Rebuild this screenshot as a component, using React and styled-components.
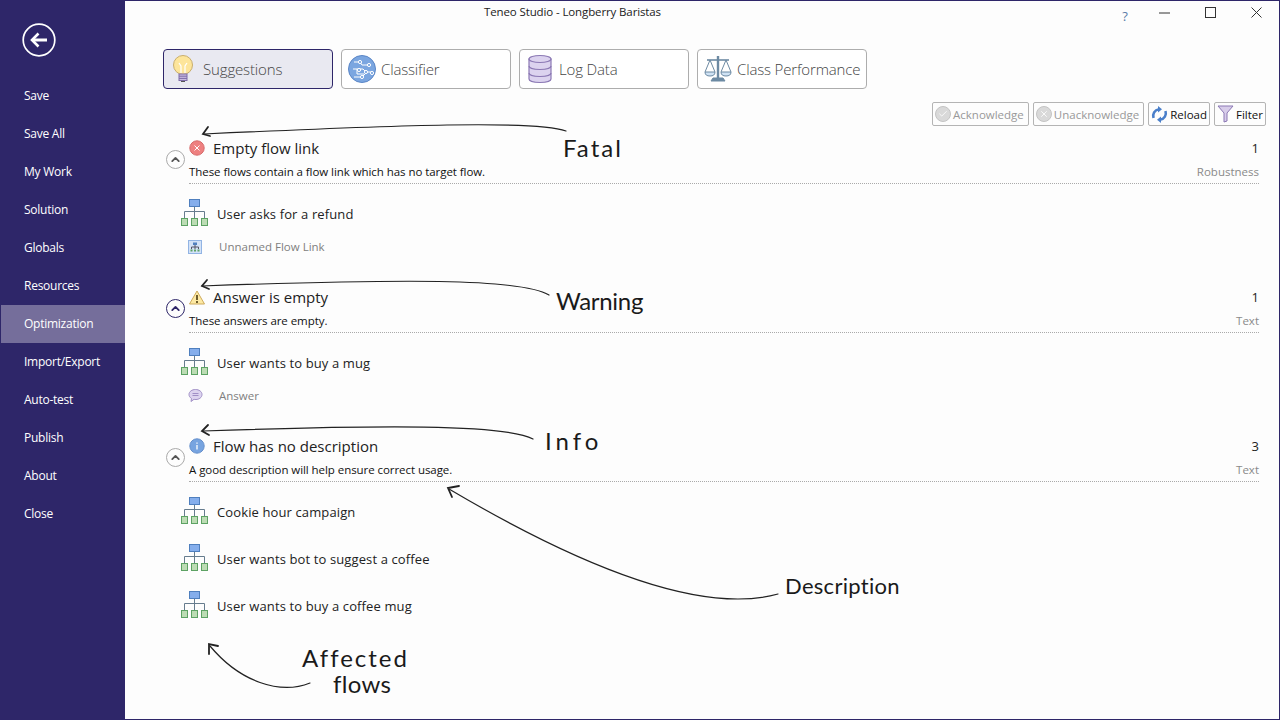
import React from 'react'
import styled, { createGlobalStyle } from 'styled-components'
import { X, Check, ChevronUp } from 'lucide-react'

const menu = ['Save', 'Save All', 'My Work', 'Solution', 'Globals', 'Resources', 'Optimization', 'Import/Export', 'Auto-test', 'Publish', 'About', 'Close']

const tabs = [
  { label: 'Suggestions', icon: <BulbIcon />, active: true },
  { label: 'Classifier', icon: <ClassifierIcon /> },
  { label: 'Log Data', icon: <DatabaseIcon /> },
  { label: 'Class Performance', icon: <ScaleIcon /> },
]

const sections = [
  {
    kind: 'fatal',
    title: 'Empty flow link',
    count: 1,
    desc: 'These flows contain a flow link which has no target flow.',
    tag: 'Robustness',
    flows: ['User asks for a refund'],
    sub: { label: 'Unnamed Flow Link', icon: <LinkIcon /> },
  },
  {
    kind: 'warning',
    title: 'Answer is empty',
    count: 1,
    desc: 'These answers are empty.',
    tag: 'Text',
    focused: true,
    flows: ['User wants to buy a mug'],
    sub: { label: 'Answer', icon: <AnswerIcon /> },
  },
  {
    kind: 'info',
    title: 'Flow has no description',
    count: 3,
    desc: 'A good description will help ensure correct usage.',
    tag: 'Text',
    flows: ['Cookie hour campaign', 'User wants bot to suggest a coffee', 'User wants to buy a coffee mug'],
  },
]

const notes = [
  { text: 'Fatal', x: 563, y: 136, size: 24, track: 2 },
  { text: 'Warning', x: 556, y: 289, size: 24, track: -0.3 },
  { text: 'Info', x: 545, y: 429, size: 24, track: 4 },
  { text: 'Description', x: 785, y: 575, size: 22, track: 0.3 },
  { text: 'Affected', x: 302, y: 646, size: 24, track: 2 },
  { text: 'flows', x: 333, y: 672, size: 24, track: 0.3 },
]

export default function App() {
  return (
    <Window>
      <GlobalStyle />
      <Sidebar>
        <BackButton>
          <svg width="34" height="34" viewBox="0 0 34 34" fill="none" stroke="#fff">
            <circle cx="17" cy="17" r="15.8" strokeWidth="1.7" />
            <path d="M10 17h15" strokeWidth="3" />
            <path d="M16.5 10.5L10 17l6.5 6.5" strokeWidth="2.6" />
          </svg>
        </BackButton>
        <Menu>
          {menu.map((item) => (
            <MenuItem key={item} $active={item === 'Optimization'}>{item}</MenuItem>
          ))}
        </Menu>
      </Sidebar>

      <Main>
        <TitleBar>
          <AppTitle>Teneo Studio - Longberry Baristas</AppTitle>
          <WindowControls>
            <HelpMark>?</HelpMark>
            <ControlButton>
              <svg width="12" height="12" viewBox="0 0 12 12" stroke="#333"><path d="M0 6h11" /></svg>
            </ControlButton>
            <ControlButton>
              <svg width="12" height="12" viewBox="0 0 12 12" fill="none" stroke="#333"><rect x=".5" y=".5" width="10" height="10" /></svg>
            </ControlButton>
            <ControlButton>
              <svg width="12" height="12" viewBox="0 0 12 12" stroke="#333"><path d="M.5.5l10 10M10.5.5l-10 10" /></svg>
            </ControlButton>
          </WindowControls>
        </TitleBar>

        <TabRow>
          {tabs.map((tab) => (
            <Tab key={tab.label} $active={tab.active}>
              <TabIcon>{tab.icon}</TabIcon>
              {tab.label}
            </Tab>
          ))}
        </TabRow>

        <Toolbar>
          <ToolButton $disabled>
            <Disc><Check size={10} color="#fff" strokeWidth={2} /></Disc>
            Acknowledge
          </ToolButton>
          <ToolButton $disabled>
            <Disc><X size={10} color="#fff" strokeWidth={2} /></Disc>
            Unacknowledge
          </ToolButton>
          <ToolButton>
            <ReloadIcon />
            Reload
          </ToolButton>
          <ToolButton>
            <FilterIcon />
            Filter
          </ToolButton>
        </Toolbar>

        {sections.map((section) => (
          <Section key={section.title}>
            <SectionHead>
              <Collapse $focused={section.focused}>
                <ChevronUp size={13} strokeWidth={3.4} color={section.focused ? '#2e2669' : '#555'} />
              </Collapse>
              <HeadBody>
                <TitleLine>
                  <SeverityIcon kind={section.kind} />
                  <SectionTitle>{section.title}</SectionTitle>
                  <Count>{section.count}</Count>
                </TitleLine>
                <DescLine>
                  <Description>{section.desc}</Description>
                  <Tag>{section.tag}</Tag>
                </DescLine>
              </HeadBody>
            </SectionHead>
            <FlowList>
              {section.flows.map((flow) => (
                <FlowRow key={flow}>
                  <FlowIcon />
                  {flow}
                </FlowRow>
              ))}
            </FlowList>
            {section.sub && (
              <SubRow>
                <SubIcon>{section.sub.icon}</SubIcon>
                {section.sub.label}
              </SubRow>
            )}
          </Section>
        ))}
      </Main>

      <Overlay width="1280" height="720" viewBox="0 0 1280 720" fill="none" stroke="#222" strokeLinecap="round">
        <path d="M566 131C535 120 400 125 204 134" strokeWidth="1.2" />
        <path d="M208 127L203 134L210 136" strokeWidth="1.8" />
        <path d="M549 295C520 278 400 279 202 286" strokeWidth="1.2" />
        <path d="M207 280L202 286L209 289" strokeWidth="1.8" />
        <path d="M533 439C505 424 380 425 203 431" strokeWidth="1.2" />
        <path d="M208 425L202 431L209 435" strokeWidth="1.8" />
        <path d="M778 594C720 610 620 590 449 489" strokeWidth="1.2" />
        <path d="M459 486L448 488L452 497" strokeWidth="1.8" />
        <path d="M310 683C280 695 240 682 210 646" strokeWidth="1.2" />
        <path d="M218 646L209 644L209 654" strokeWidth="1.8" />
      </Overlay>
      {notes.map((note) => (
        <Note key={note.text} $x={note.x} $y={note.y} $size={note.size} $track={note.track}>{note.text}</Note>
      ))}
    </Window>
  )
}

function BulbIcon() {
  return (
    <svg width="24" height="30" viewBox="0 0 24 30">
      <circle cx="11" cy="11" r="9.5" fill="#fde59a" stroke="#c9ae6c" />
      <path d="M9 19v-7l-2-3M13 19v-7l2-3" fill="none" stroke="#fff" strokeWidth="1.2" />
      <rect x="7" y="20" width="8" height="6.5" fill="#c9bbe0" stroke="#7e6ca8" />
      <path d="M7 22.2h8M7 24.4h8" stroke="#7e6ca8" />
      <path d="M9 27.5h4" stroke="#555" />
    </svg>
  )
}

function ClassifierIcon() {
  return (
    <svg width="28" height="28" viewBox="0 0 28 28" fill="none">
      <circle cx="14" cy="14" r="13.5" fill="#7ba6e0" stroke="#5b86c6" />
      <g stroke="#fff">
        <path d="M6 7h6l2 3h7M5 14h4v5h7M9 14h6l3 3h6M6 22h8l3-3" />
        <circle cx="12" cy="7" r="1.6" fill="#7ba6e0" />
        <circle cx="21" cy="10" r="1.6" fill="#7ba6e0" />
        <circle cx="11" cy="15" r="1.6" fill="#7ba6e0" />
        <circle cx="18" cy="17" r="1.6" fill="#7ba6e0" />
        <circle cx="24" cy="18" r="1.6" fill="#7ba6e0" />
        <circle cx="14" cy="22" r="1.6" fill="#7ba6e0" />
      </g>
    </svg>
  )
}

function DatabaseIcon() {
  return (
    <svg width="24" height="30" viewBox="0 0 24 30" fill="#dcd3ef" stroke="#8b78b4" strokeWidth="1.2">
      <path d="M1 5v20c0 2 4.500 3.500 11 3.500S23 27 23 25V5z" />
      <ellipse cx="12" cy="5" rx="11" ry="3.500" />
      <path d="M1 12c0 2 4.500 3.500 11 3.500S23 14 23 12M1 19c0 2 4.500 3.500 11 3.500S23 21 23 19" fill="none" />
    </svg>
  )
}

function ScaleIcon() {
  return (
    <svg width="28" height="28" viewBox="0 0 28 28" fill="none" stroke="#6d8aa3">
      <path d="M14 1v22" strokeWidth="2.4" />
      <path d="M3 5h22" strokeWidth="1.6" />
      <path d="M7 26l2-3h10l2 3z" fill="#6d8aa3" />
      <path d="M6 5L1 17M6 5l5 12M22 5l-5 12M22 5l5 12" />
      <path d="M1 17h10c0 3-2 4-5 4s-5-1-5-4zM17 17h10c0 3-2 4-5 4s-5-1-5-4z" fill="#cfe2f4" />
    </svg>
  )
}

function ReloadIcon() {
  return (
    <svg width="17" height="17" viewBox="0 0 16 17" fill="none" stroke="#4a7fca" strokeWidth="2.6">
      <path d="M2 12C0.8 8 3 3.800 7.500 3.200" />
      <path d="M14 5c1.200 4-1 8.200-5.500 8.800" />
      <path d="M6.500 0v6.500L10.500 3.200z" fill="#4a7fca" stroke="none" />
      <path d="M9.500 17v-6.500L5.500 13.800z" fill="#4a7fca" stroke="none" />
    </svg>
  )
}

function FilterIcon() {
  return (
    <svg width="17" height="18" viewBox="0 0 17 18" fill="#d8cdea" stroke="#8b78b4">
      <path d="M1 1h15l-6 7v8l-3 1V8z" />
    </svg>
  )
}

function SeverityIcon({ kind }) {
  if (kind === 'warning') {
    return (
      <SeverityBox>
        <svg width="16" height="15" viewBox="0 0 16 15">
          <path d="M8 1L15.500 14H.5z" fill="#fde9a3" stroke="#cdaa5c" strokeLinejoin="round" />
          <path d="M8 5v5M8 11v2" stroke="#4a3a10" strokeWidth="1.6" />
        </svg>
      </SeverityBox>
    )
  }
  const fatal = kind === 'fatal'
  return (
    <SeverityBox>
      <svg width="16" height="16" viewBox="0 0 16 16" fill="none">
        <circle cx="8" cy="8" r="7.200" fill={fatal ? '#ee8080' : '#77a4e0'} stroke={fatal ? '#d66a6a' : '#6690cc'} />
        {fatal
          ? <path d="M5.500 5.500l5 5M10.500 5.500l-5 5" stroke="#fff" />
          : <path d="M8 4.500v1.200M8 7v4.500" stroke="#fff" strokeWidth="1.300" />}
      </svg>
    </SeverityBox>
  )
}

function FlowIcon() {
  return (
    <FlowGlyph width="28" height="29" viewBox="0 0 28 29" fill="none">
      <rect x="8.500" y=".5" width="10" height="7" fill="#85aeec" stroke="#4f7fbe" />
      <path d="M13.500 8v11M3.500 19v-6.500h20V19" stroke="#667c8e" />
      <g fill="#bcdcb4" stroke="#5da264">
        <rect x=".5" y="19.500" width="6" height="7" />
        <rect x="10.500" y="19.500" width="6" height="7" />
        <rect x="20.500" y="19.500" width="6" height="7" />
      </g>
    </FlowGlyph>
  )
}

function LinkIcon() {
  return (
    <svg width="14" height="14" viewBox="0 0 14 14" fill="none">
      <rect x=".5" y=".5" width="13" height="13" fill="#d3e2f7" stroke="#92b4e4" />
      <rect x="5" y="2.500" width="4" height="2.500" fill="#4f7fbe" />
      <path d="M7 5v4M3.500 9V7h7v2" stroke="#556" />
      <path d="M2.500 9.500h2v2h-2zM6 9.500h2v2H6zM9.500 9.500h2v2h-2z" fill="#5da264" />
    </svg>
  )
}

function AnswerIcon() {
  return (
    <svg width="15" height="15" viewBox="0 0 15 15" fill="#dcd3ef" stroke="#a08fc6">
      <path d="M7.500 1.500c3.500 0 6.500 2 6.500 5s-3 5-6 5c-.8 0-1.500 0-2-.2L3 13.500l.5-3C1.800 9.500 1 8 1 6.500c0-3 3-5 6.500-5z" />
      <path d="M4.500 5.500h6M4.500 7.500h6" fill="none" />
    </svg>
  )
}

const GlobalStyle = createGlobalStyle`
  html, body {
    margin: 0;
    padding: 0;
    background: #fdfdfd;
  }
  body {
    font-family: "Open Sans", "Noto Sans", sans-serif;
  }
`

const Window = styled.div`
  position: relative;
  display: flex;
  width: 1280px;
  height: 720px;
  overflow: hidden;
  background: #fdfdfd;
  box-sizing: border-box;
  border: 1px solid #2e2669;
  border-left: 0;
`

const Sidebar = styled.nav`
  flex: none;
  width: 125px;
  box-sizing: border-box;
  margin-top: -1px;
  padding-left: 1px;
  background: #2e2669;
  color: #fff;
`

const BackButton = styled.div`
  display: flex;
  padding: 23px 0 0 21px;
  height: 54px;
`

const Menu = styled.div`
  display: flex;
  flex-direction: column;
`

const MenuItem = styled.div`
  height: 38px;
  line-height: 38px;
  padding-left: 23px;
  font-size: 12px;
  letter-spacing: -0.25px;
  background: ${(p) => (p.$active ? '#756e9b' : 'transparent')};
`

const Main = styled.main`
  flex: 1;
  min-width: 0;
  display: flex;
  flex-direction: column;
`

const TitleBar = styled.header`
  display: flex;
  height: 48px;
  flex: none;
`

const AppTitle = styled.div`
  margin: 3px 0 0 359px;
  font-size: 11.500px;
  letter-spacing: -0.12px;
  line-height: 16px;
  color: #222;
`

const WindowControls = styled.div`
  margin: 0 -1px 0 auto;
  display: flex;
  align-items: flex-start;
  padding-top: 6px;
`

const HelpMark = styled.div`
  width: 24px;
  margin-right: 5px;
  text-align: center;
  font-size: 13px;
  color: #5b7ba8;
`

const ControlButton = styled.div`
  width: 46px;
  display: flex;
  justify-content: center;
`

const TabRow = styled.div`
  display: flex;
  gap: 8px;
  padding-left: 38px;
  flex: none;
`

const Tab = styled.div`
  width: 170px;
  height: 40px;
  box-sizing: border-box;
  display: flex;
  align-items: center;
  border: 1px solid ${(p) => (p.$active ? '#2e2669' : '#adadad')};
  border-radius: 4px;
  background: ${(p) => (p.$active ? '#e9e9f1' : '#fff')};
  font-size: 15px;
  font-weight: 300;
  letter-spacing: -0.15px;
  color: #444;
  white-space: nowrap;
`

const TabIcon = styled.span`
  flex: none;
  width: 39px;
  display: flex;
  justify-content: center;
`

const Toolbar = styled.div`
  display: flex;
  justify-content: flex-end;
  gap: 4px;
  margin-top: 13px;
  padding-right: 13px;
  flex: none;
`

const ToolButton = styled.div`
  height: 24px;
  box-sizing: border-box;
  display: flex;
  align-items: center;
  gap: 2px;
  padding: 0 ${(p) => (p.$disabled ? '4px' : '2px')} 0 2px;
  border: 1px solid #b4b4b4;
  border-radius: 2px;
  font-size: 11.500px;
  color: ${(p) => (p.$disabled ? '#999' : '#111')};
`

const Disc = styled.span`
  width: 16px;
  height: 16px;
  border-radius: 50%;
  background: #d9d9d9;
  border: 1px solid #c4c4c4;
  box-sizing: border-box;
  display: flex;
  align-items: center;
  justify-content: center;
`

const Section = styled.section`
  padding: 0 20px 0 38px;
  height: 149px;
  flex: none;
  box-sizing: border-box;

  &:first-of-type {
    margin-top: 10px;
  }
`

const SectionHead = styled.div`
  display: flex;
  align-items: center;
`

const Collapse = styled.div`
  flex: none;
  width: 19px;
  height: 19px;
  margin: 0 4px 2px 3px;
  box-sizing: border-box;
  border-radius: 50%;
  border: 1px solid ${(p) => (p.$focused ? '#2e2669' : '#aaa')};
  display: flex;
  align-items: center;
  justify-content: center;
`

const HeadBody = styled.div`
  flex: 1;
  min-width: 0;
`

const TitleLine = styled.div`
  height: 24px;
  display: flex;
  align-items: center;
`

const SeverityBox = styled.span`
  width: 24px;
  display: flex;
  flex: none;
`

const SectionTitle = styled.div`
  font-size: 15px;
  color: #222;
`

const Count = styled.div`
  margin-left: auto;
  font-size: 13px;
  color: #222;
`

const DescLine = styled.div`
  height: 24px;
  box-sizing: border-box;
  display: flex;
  align-items: center;
  justify-content: space-between;
  border-bottom: 1px dotted #aaa;
`

const Description = styled.div`
  font-size: 11.500px;
  letter-spacing: -0.06px;
  color: #111;
`

const Tag = styled.div`
  font-size: 11.500px;
  color: #8a8a8a;
`

const FlowList = styled.div`
  display: flex;
  flex-direction: column;
  margin-top: 15px;
`

const FlowRow = styled.div`
  height: 47px;
  display: flex;
  align-items: flex-start;
  margin-left: 18px;
  font-size: 13px;
  letter-spacing: 0.12px;
  line-height: 30px;
  color: #222;

  &:only-child {
    height: 31px;
  }
`

const FlowGlyph = styled.svg`
  flex: none;
  margin-right: 8px;
`

const SubRow = styled.div`
  height: 33px;
  display: flex;
  align-items: center;
  margin-left: 25px;
  font-size: 11.500px;
  color: #808080;
`

const SubIcon = styled.span`
  width: 31px;
  display: flex;
  flex: none;
`

const Overlay = styled.svg`
  position: absolute;
  left: 0;
  top: -1px;
  pointer-events: none;
`

const Note = styled.div`
  position: absolute;
  left: ${(p) => p.$x}px;
  top: ${(p) => p.$y - 1}px;
  font-family: "Lato", "Open Sans", sans-serif;
  font-size: ${(p) => p.$size}px;
  letter-spacing: ${(p) => p.$track}px;
  line-height: 1;
  color: #1a1a1a;
  white-space: nowrap;
`
